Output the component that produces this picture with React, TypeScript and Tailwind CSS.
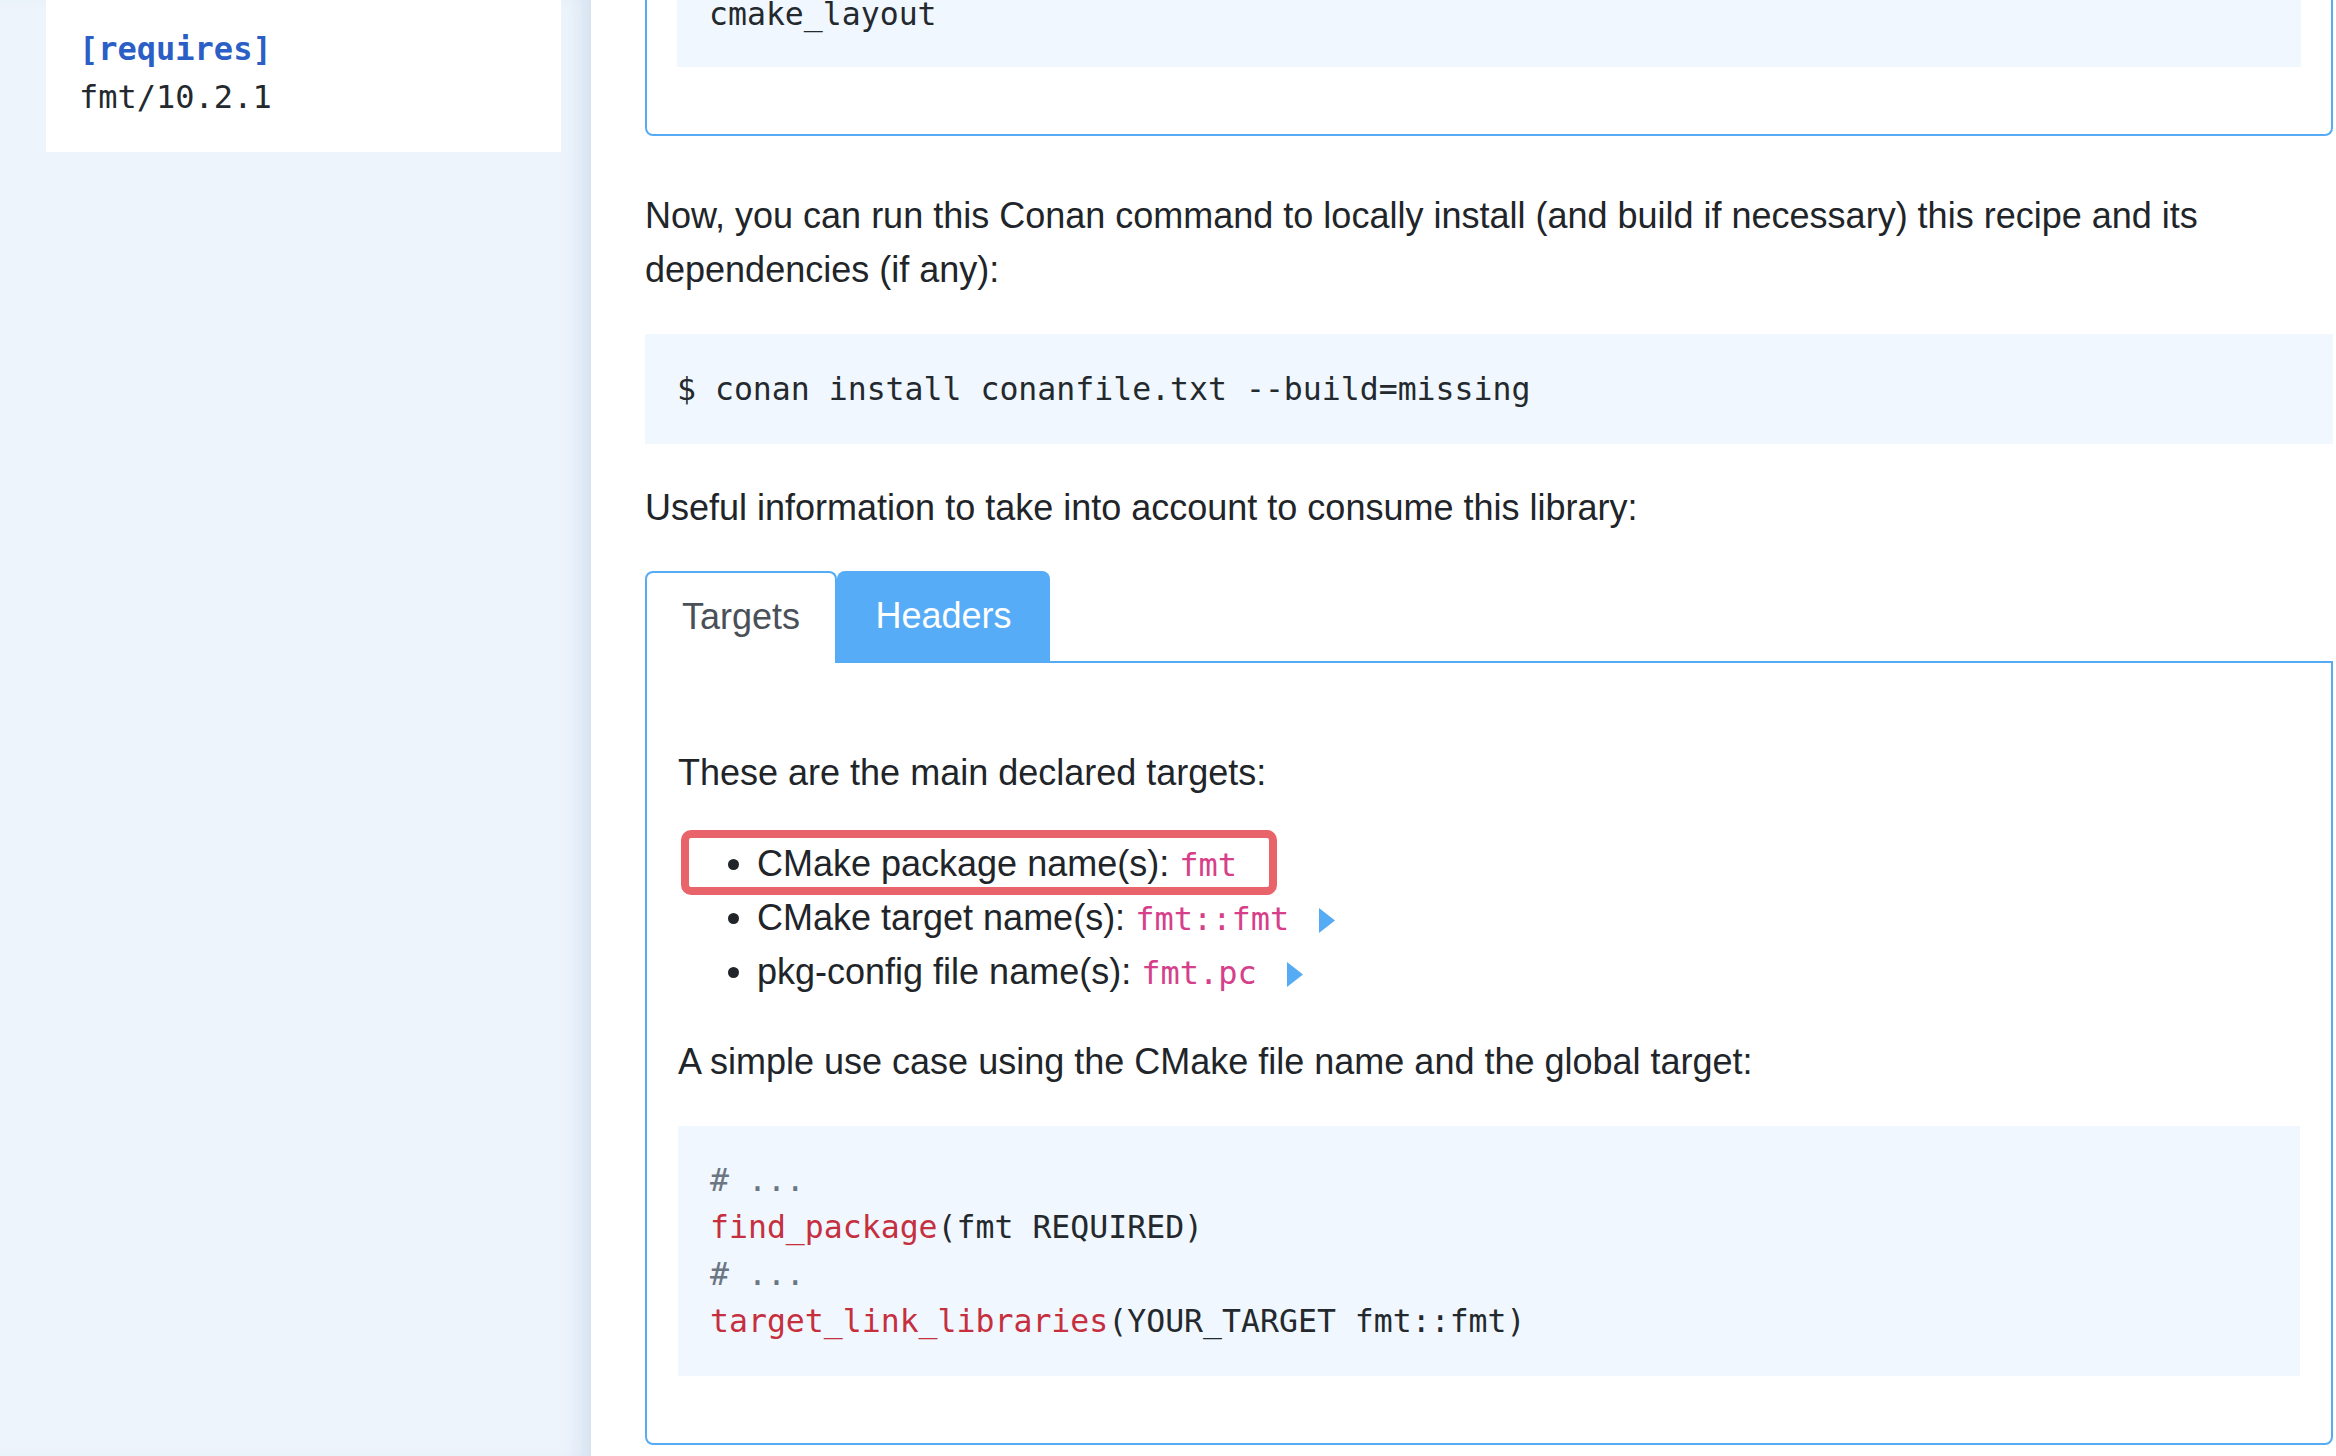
import React from 'react';

const mono = "font-['DejaVu_Sans_Mono',monospace]";

const Arrow: React.FC = () => (
  <svg width="16" height="25" viewBox="0 0 16 25" className="inline-block ml-[30px] align-[-3px]">
    <polygon points="0,0 16,12.5 0,25" fill="#56abf5" />
  </svg>
);

const App: React.FC = () => {
  return (
    <div className="flex h-[1456px] w-[2336px] overflow-hidden bg-white text-[#212529] font-['Liberation_Sans',Arial,sans-serif]">
      {/* sidebar */}
      <aside className="w-[591px] shrink-0 bg-[#edf4fc] shadow-[inset_-22px_0_22px_-14px_rgba(70,110,160,0.16)]">
        <div className={`ml-[46px] w-[515px] bg-white pt-[25px] pb-[31px] pl-[33px] text-[32px] leading-[48px] ${mono}`}>
          <div className="font-bold text-[#2b5fc6]">[requires]</div>
          <div className="text-[#24292e]">fmt/10.2.1</div>
        </div>
      </aside>

      {/* main */}
      <main className="flex-1 pl-[54px] pr-[3px] text-[36px] leading-[54px]">
        <div className="border-x-2 border-b-2 border-[#55acf5] rounded-b-[8px] px-[30px] pb-[67px]">
          <pre className={`bg-[#f0f7fe] pl-[32px] pb-[29px] text-[31.5px] leading-[47px] text-[#24292e] ${mono}`}>
            <div className="-mt-[9px]">cmake_layout</div>
          </pre>
        </div>

        <p className="mt-[53px]">
          Now, you can run this Conan command to locally install (and build if necessary) this recipe and its dependencies (if any):
        </p>

        <pre className={`mt-[37px] bg-[#f0f7fe] px-[32px] py-[31px] text-[31.5px] leading-[48px] text-[#24292e] ${mono}`}>
          $ conan install conanfile.txt --build=missing
        </pre>

        <p className="mt-[37px]">Useful information to take into account to consume this library:</p>

        {/* tabs */}
        <div className="mt-[36px]">
          <div className="flex items-end">
            <div className="relative z-10 -mb-[2px] flex h-[92px] w-[192px] items-center justify-center rounded-t-[8px] border-x-2 border-t-2 border-[#55acf5] bg-white pb-[2px] text-[#4a5057]">
              Targets
            </div>
            <div className="flex h-[90px] w-[213px] items-center justify-center rounded-t-[8px] bg-[#56acf7] text-white">
              Headers
            </div>
            <div className="flex-1" />
          </div>

          <div className="h-[784px] rounded-b-[8px] border-2 border-[#55acf5] px-[31px] pt-[83px]">
            <p>These are the main declared targets:</p>

            <ul className="relative mt-[37px] pl-[79px]">
              <div className="pointer-events-none absolute -top-[7px] left-[3px] h-[65px] w-[596px] rounded-[10px] border-[8px] border-[#e9636a]" />
              <li className="list-disc h-[54px]">
                CMake package name(s): <code className={`text-[32px] leading-none text-[#d6408a] ${mono}`}>fmt</code>
              </li>
              <li className="list-disc h-[54px]">
                CMake target name(s): <code className={`text-[32px] leading-none text-[#d6408a] ${mono}`}>fmt::fmt</code>
                <Arrow />
              </li>
              <li className="list-disc h-[54px]">
                pkg-config file name(s): <code className={`text-[32px] leading-none text-[#d6408a] ${mono}`}>fmt.pc</code>
                <Arrow />
              </li>
            </ul>

            <p className="mt-[36px]">A simple use case using the CMake file name and the global target:</p>

            <pre className={`mt-[37px] bg-[#f0f7fe] px-[32px] py-[31px] text-[31.5px] leading-[47px] text-[#24292e] ${mono}`}>
              <div className="text-[#6b7682]"># ...</div>
              <div>
                <span className="text-[#c6303e]">find_package</span>(fmt REQUIRED)
              </div>
              <div className="text-[#6b7682]"># ...</div>
              <div>
                <span className="text-[#c6303e]">target_link_libraries</span>(YOUR_TARGET fmt::fmt)
              </div>
            </pre>
          </div>
        </div>
      </main>
    </div>
  );
};

export default App;
